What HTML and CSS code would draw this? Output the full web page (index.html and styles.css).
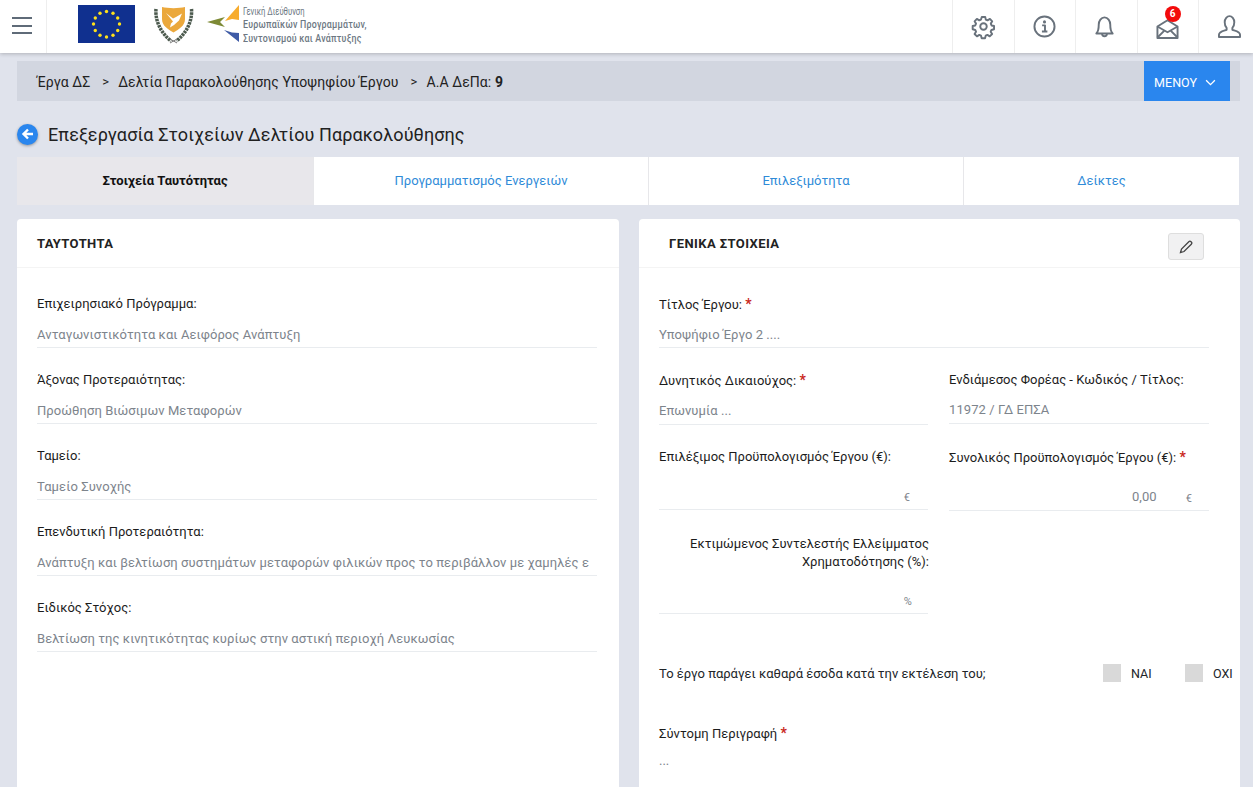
FILE: index.html
```html
<!DOCTYPE html>
<html lang="el">
<head>
<meta charset="utf-8">
<title>Επεξεργασία Στοιχείων Δελτίου Παρακολούθησης</title>
<link rel="stylesheet" href="styles.css">
</head>
<body>
<header class="topbar">
  <button class="burger" aria-label="menu"><span></span><span></span><span></span></button>
  <div class="logos">
    <svg class="eu" viewBox="0 0 57 38" width="57" height="38">
      <rect width="57" height="38" fill="#10308f"/>
      <g fill="#ffe11a">
        <circle cx="28.5" cy="6.5" r="1.7"/><circle cx="35" cy="8.2" r="1.7"/><circle cx="39.7" cy="13" r="1.7"/><circle cx="41.5" cy="19" r="1.7"/><circle cx="39.7" cy="25.5" r="1.7"/><circle cx="35" cy="30.2" r="1.7"/><circle cx="28.5" cy="32" r="1.7"/><circle cx="22" cy="30.2" r="1.7"/><circle cx="17.3" cy="25.5" r="1.7"/><circle cx="15.5" cy="19" r="1.7"/><circle cx="17.3" cy="13" r="1.7"/><circle cx="22" cy="8.2" r="1.7"/>
      </g>
    </svg>
    <svg class="cy" viewBox="0 0 38 38" width="38" height="38">
      <path d="M7 2C13 3.500 24 3.500 30 2V14C30 21 24 24 18.500 27.500C13 24 7 21 7 14Z" fill="#eba83c"/>
      <path d="M11 8L18 13.500L21 12L27 8.500L24 15.500L19 20L15 22.500L16 18.500L18 16.500Z" fill="#fff"/>
      <path d="M1 4C0 16 6 28 16 36" fill="none" stroke="#4c5a4e" stroke-width="3.500" stroke-dasharray="2.500 .8"/>
      <path d="M36.500 4C37.500 16 31.500 28 21.500 36" fill="none" stroke="#4c5a4e" stroke-width="3.500" stroke-dasharray="2.500 .8"/>
      <path d="M15 34L22 38M22 34L15 38" stroke="#777" stroke-width="1"/>
    </svg>
    <div class="dg">
      <svg viewBox="0 0 36 40" width="36" height="40">
        <path d="M0 18L18 13L13 18L18 23Z" fill="#7d8a35"/>
        <path d="M18 17L32 1V16L25 15Z" fill="#f7ac2e"/>
        <path d="M17 26L32 38V29L25 28.500Z" fill="#3f5ba6"/>
      </svg>
      <div class="dg-text">
        <small>Γενική Διεύθυνση</small>
        <strong>Ευρωπαϊκών Προγραμμάτων,</strong>
        <strong>Συντονισμού και Ανάπτυξης</strong>
      </div>
    </div>
  </div>
  <nav class="top-icons">
    <a class="ti"><svg viewBox="0 0 24 24" width="23" height="23"><circle cx="12" cy="12" r="3.4"/><path d="M10.200 2h3.600l.6 2.800 1.800.8 2.500-1.500 2.400 2.500-1.500 2.400.8 1.900 2.600.6v3.400l-2.700.7-.8 1.800 1.500 2.400-2.500 2.500-2.400-1.500-1.800.8-.7 2.700h-3.500l-.7-2.700-1.800-.8-2.400 1.500-2.500-2.500 1.500-2.400-.8-1.800-2.700-.7v-3.400l2.700-.6.800-1.900-1.500-2.400 2.400-2.500 2.500 1.500 1.800-.8z"/></svg></a>
    <a class="ti"><svg viewBox="0 0 24 24" width="23" height="23"><circle cx="12" cy="12" r="10.500"/><circle class="fill" cx="12" cy="7.200" r="1.600"/><path d="M9.500 10.800H12.500V17M9.300 17.200H15"/></svg></a>
    <a class="ti bell"><svg viewBox="0 0 24 24" width="23" height="23"><path d="M3.500 19.300C6 17 6 14 6 10C6 6 8.500 2.500 12 2.500S18 6 18 10C18 14 18 17 20.500 19.300Z"/><path d="M9.500 19.500C9.500 23 14.500 23 14.500 19.500"/></svg></a>
    <a class="ti"><svg viewBox="0 0 24 24" width="23" height="23"><path d="M1.500 12L12 5.500L22.500 12V24H1.500Z"/><path d="M1.500 12L12 18L22.500 12M1.500 23.500L9 16M22.500 23.500L15 16"/></svg><span class="badge">6</span></a>
    <a class="ti user"><svg viewBox="0 0 24 24" width="23" height="23"><path d="M1 23V20.500C1 17.500 6.500 16.500 9 15.500V13.500C7.500 12 7 10 7 7.500C7 4 9.500 1.200 12 1.200S17 4 17 7.500C17 10 16.500 12 15 13.500V15.500C17.500 16.500 23 17.500 23 20.500V23Z"/></svg></a>
  </nav>
</header>

<main class="page">
  <div class="crumbs">
    <ol>
      <li>Έργα ΔΣ</li>
      <li class="sep">&gt;</li>
      <li>Δελτία Παρακολούθησης Υποψηφίου Έργου</li>
      <li class="sep">&gt;</li>
      <li>Α.Α ΔεΠα: <b>9</b></li>
    </ol>
    <button class="menu-btn">ΜΕΝΟΥ
      <svg viewBox="0 0 12 8" width="11" height="7"><path d="M1 1.500L6 6.500L11 1.500"/></svg>
    </button>
  </div>

  <h1 class="title">
    <span class="back"><svg viewBox="0 0 16 16" width="16" height="16"><path d="M13 8H4M8 3.500L3.500 8L8 12.500"/></svg></span>
    Επεξεργασία Στοιχείων Δελτίου Παρακολούθησης
  </h1>

  <div class="tabs">
    <a class="tab active">Στοιχεία Ταυτότητας</a>
    <a class="tab">Προγραμματισμός Ενεργειών</a>
    <a class="tab">Επιλεξιμότητα</a>
    <a class="tab">Δείκτες</a>
  </div>

  <div class="panels">
    <section class="panel">
      <div class="panel-head"><h2>ΤΑΥΤΟΤΗΤΑ</h2></div>
      <div class="panel-body">
        <div class="field"><label>Επιχειρησιακό Πρόγραμμα:</label><div class="value">Ανταγωνιστικότητα και Αειφόρος Ανάπτυξη</div></div>
        <div class="field"><label>Άξονας Προτεραιότητας:</label><div class="value">Προώθηση Βιώσιμων Μεταφορών</div></div>
        <div class="field"><label>Ταμείο:</label><div class="value">Ταμείο Συνοχής</div></div>
        <div class="field"><label>Επενδυτική Προτεραιότητα:</label><div class="value">Ανάπτυξη και βελτίωση συστημάτων μεταφορών φιλικών προς το περιβάλλον με χαμηλές ε</div></div>
        <div class="field"><label>Ειδικός Στόχος:</label><div class="value">Βελτίωση της κινητικότητας κυρίως στην αστική περιοχή Λευκωσίας</div></div>
      </div>
    </section>

    <section class="panel right">
      <div class="panel-head">
        <h2>ΓΕΝΙΚΑ ΣΤΟΙΧΕΙΑ</h2>
        <button class="edit" aria-label="edit"><svg viewBox="0 0 14 14" width="14" height="14"><path d="M1.500 12.500L2.500 9L9.800 1.700C10.500 1 11.300 1 12 1.700L12.300 2C13 2.700 13 3.500 12.300 4.200L5 11.500Z"/></svg></button>
      </div>
      <div class="panel-body">
        <div class="field full"><label>Τίτλος Έργου: <i>*</i></label><div class="value">Υποψήφιο Έργο 2 ....</div></div>
        <div class="cols first">
          <div class="field"><label>Δυνητικός Δικαιούχος: <i>*</i></label><div class="value">Επωνυμία ...</div></div>
          <div class="field"><label>Ενδιάμεσος Φορέας - Κωδικός / Τίτλος:</label><div class="value">11972 / ΓΔ ΕΠΣΑ</div></div>
        </div>
        <div class="cols budget">
          <div class="field"><label>Επιλέξιμος Προϋπολογισμός Έργου (€):</label><div class="value num"><span></span><em>€</em></div></div>
          <div class="field"><label>Συνολικός Προϋπολογισμός Έργου (€): <i>*</i></label><div class="value num"><span>0,00</span><em>€</em></div></div>
        </div>
        <div class="cols rate">
          <div class="field"><label>Εκτιμώμενος Συντελεστής Ελλείμματος Χρηματοδότησης (%):</label><div class="value num"><span></span><em>%</em></div></div>
        </div>
        <div class="income">
          <span class="q">Το έργο παράγει καθαρά έσοδα κατά την εκτέλεση του;</span>
          <span class="opt"><span class="box"></span>ΝΑΙ</span>
          <span class="opt"><span class="box"></span>ΟΧΙ</span>
        </div>
        <div class="summary"><label>Σύντομη Περιγραφή <i>*</i></label><div class="dots">...</div></div>
      </div>
    </section>
  </div>
</main>
</body>
</html>
```

FILE: styles.css
```css
* { box-sizing: border-box; }
html, body { margin: 0; height: 787px; overflow: hidden; }
body { background: #e0e3ec; font-family: Roboto, "Liberation Sans", sans-serif; font-size: 13px; color: #212529; }
button { font-family: inherit; border: 0; padding: 0; }

.topbar { height: 53px; background: #fff; display: flex; align-items: stretch; box-shadow: 0 1px 4px rgba(0,0,0,.22); position: relative; }
.burger { width: 47px; background: #fff; border-right: 1px solid #eee; display: flex; flex-direction: column; gap: 5.500px; padding: 17px 0 0 12px; }
.burger span { display: block; width: 20px; height: 2px; background: #5f6b78; }
.logos { flex: 1; display: flex; align-items: flex-start; padding: 5px 0 0 31px; }
.eu { margin-right: 20px; }
.cy { overflow: visible; margin-right: 14px; }
.dg { display: flex; gap: 0; margin-top: -1px; }
.dg svg { overflow: visible; margin-top: 0; }
.dg-text { display: flex; flex-direction: column; font-size: 11.500px; line-height: 14px; color: #6c7782; padding-top: 2px; width: 140px; transform: scaleX(.77); transform-origin: left top; white-space: nowrap; }
.dg-text small { font-size: 10px; line-height: 12px; margin-bottom: -1px; }
.dg-text strong { font-weight: 500; letter-spacing: .3px; }
.top-icons { display: flex; }
.ti { width: 61.500px; border-left: 1px solid #eee; display: flex; align-items: center; justify-content: center; position: relative; }
.ti:last-child { width: 55px; }
.ti.bell { padding-right: 4px; }
.ti.user { padding-left: 6px; }
.ti svg { fill: none; stroke: #69727c; stroke-width: 2; stroke-linejoin: round; overflow: visible; }
.ti .fill { fill: #69727c; stroke: none; }
.badge { position: absolute; top: 6px; left: 27px; width: 16px; height: 16px; border-radius: 50%; background: #f30b0b; color: #fff; font-size: 10px; font-weight: 700; line-height: 16px; text-align: center; }

.page { padding: 8px 13px 0 17px; }
.crumbs { height: 40px; background: #d2d6e0; display: flex; align-items: center; justify-content: space-between; padding: 0 10px 0 20px; }
.crumbs ol { list-style: none; margin: 2px 0 0; padding: 0; display: flex; color: #222; font-size: 14px; letter-spacing: .08px; }
.sep { margin: 0 9px 0 12px; font-size: 13px; }
.menu-btn { width: 86px; height: 40px; background: #2a86ee; color: #fff; font-size: 12.500px; display: flex; align-items: center; justify-content: center; gap: 8px; padding: 2px 4px 0 0; }
.menu-btn svg { fill: none; stroke: #fff; stroke-width: 1.500; }

.title { margin: 22px 0 10px; font-size: 18px; font-weight: 400; line-height: 24px; color: #212121; display: flex; align-items: center; gap: 10px; letter-spacing: .09px; }
.back { width: 21px; height: 21px; margin-top: -2px; border-radius: 50%; background: #2a86ee; display: flex; align-items: center; justify-content: center; box-shadow: 0 1px 3px rgba(0,0,0,.35); }
.back svg { fill: none; stroke: #fff; stroke-width: 2.400; }

.tabs { display: grid; grid-template-columns: 296px 335px 315px 276px; height: 48px; background: #fff; margin-right: 1px; }
.tab { display: flex; align-items: center; justify-content: center; color: #2f8bd8; border-left: 1px solid #e7e7ea; padding-bottom: 2px; }
.tab:first-child { border-left: 0; }
.tab.active { background: #e8e7eb; color: #111; font-weight: 700; }

.panels { display: grid; grid-template-columns: 602px 601px; gap: 20px; margin-top: 14px; }
.panel { background: #fff; height: 600px; border-radius: 4px 4px 0 0; }
.panel-head { height: 48px; display: flex; justify-content: space-between; align-items: flex-start; padding: 17px 22px 0 20px; box-shadow: 0 1px 0 #f4f4f4; }
.panel-head h2 { margin: 0; font-size: 13px; line-height: 15px; font-weight: 700; color: #222; letter-spacing: .3px; }
.panel-body { padding: 29px 22px 0 20px; }
.field { height: 76px; }
.field label { display: block; line-height: 16px; color: #1c1c1c; }
.value { margin-top: 13px; height: 23px; padding-top: 1px; color: #7d848c; line-height: 18px; border-bottom: 1px solid #e9ecef; white-space: nowrap; letter-spacing: .07px; }
i { color: #c9271c; font-style: normal; font-weight: 700; font-size: 14px; }

.right .panel-head { padding: 17px 36px 0 30px; }
.right h2 { letter-spacing: .42px; }
.right .panel-body { padding: 29px 31px 0 20px; }
.right .value { padding-top: 0; }
.right .full .value { margin-top: 12px; padding-top: 1px; }
.first .field { height: 77px; }
.edit { width: 36px; height: 27px; margin-top: -3px; background: #f1f1f2; border: 1px solid #dedede; border-radius: 3px; display: flex; align-items: center; justify-content: center; }
.edit svg { fill: none; stroke: #444; stroke-width: 1.300; }
.cols { display: grid; grid-template-columns: 269px 260px; gap: 21px; }
.budget .field { height: 86px; }
.num { display: flex; justify-content: flex-end; gap: 29px; padding-right: 17px; margin-top: 22px; }
.num em { font-style: normal; font-size: 11px; padding-top: 2px; }
.budget .field:first-child .num { padding-right: 18px; }
.num span:empty { display: none; }
.rate .field { height: 79px; }
.rate label { text-align: right; line-height: 18px; margin-right: -1px; }
.rate .num { margin-top: 20px; padding-right: 16px; }
.income { display: flex; align-items: center; height: 20px; margin: 49px -58px 0 0; }
.q { flex: 1; }
.opt { display: flex; align-items: center; gap: 10px; font-size: 12.500px; width: 82px; }
.box { width: 18px; height: 18px; background: #d9d9d9; }
.summary { margin-top: 42px; }
.summary label { display: block; line-height: 16px; color: #1c1c1c; }
.dots { margin-top: 11px; color: #7d848c; }
```
